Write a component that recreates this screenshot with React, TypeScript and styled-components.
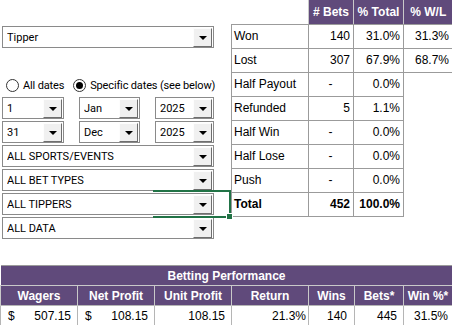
import React from 'react';
import styled, { createGlobalStyle } from 'styled-components';

const PURPLE = '#604a7b';
const GRID = '#9b9b9b';
const LIGHT = '#c9c9c9';

const GlobalStyle = createGlobalStyle`
  html, body { margin: 0; padding: 0; background: #fff; }
  body {
    width: 452px;
    height: 325px;
    overflow: hidden;
    font-family: "Liberation Sans", Arial, sans-serif;
  }
`;

const outcomes = [
  { label: 'Won', bets: '140', total: '31.0%', wl: '31.3%' },
  { label: 'Lost', bets: '307', total: '67.9%', wl: '68.7%' },
  { label: 'Half Payout', bets: '-', total: '0.0%' },
  { label: 'Refunded', bets: '5', total: '1.1%' },
  { label: 'Half Win', bets: '-', total: '0.0%' },
  { label: 'Half Lose', bets: '-', total: '0.0%' },
  { label: 'Push', bets: '-', total: '0.0%' },
];

const filters = ['ALL SPORTS/EVENTS', 'ALL BET TYPES', 'ALL TIPPERS', 'ALL DATA'];

const Dropdown: React.FC<{ value: string; width?: number }> = ({ value, width }) => (
  <Select $w={width}>
    <SelectText>{value}</SelectText>
    <DropButton>
      <Arrow />
    </DropButton>
  </Select>
);

const App: React.FC = () => {
  return (
    <Sheet>
      <GlobalStyle />
      <Top>
        <Controls>
          <TipperWrap>
            <Dropdown value="Tipper" />
          </TipperWrap>
          <RadioRow>
            <RadioItem>
              <Radio />
              All dates
            </RadioItem>
            <RadioItem>
              <Radio $checked />
              Specific dates (see below)
            </RadioItem>
          </RadioRow>
          <DateRow>
            <Dropdown value="1" width={62} />
            <Dropdown value="Jan" width={61} />
            <Dropdown value="2025" width={59} />
          </DateRow>
          <DateRow>
            <Dropdown value="31" width={62} />
            <Dropdown value="Dec" width={61} />
            <Dropdown value="2025" width={59} />
          </DateRow>
          {filters.map((f) => (
            <Dropdown key={f} value={f} />
          ))}
        </Controls>

        <StatsTable>
          <colgroup>
            <col style={{ width: 77 }} />
            <col style={{ width: 45 }} />
            <col style={{ width: 50 }} />
            <col style={{ width: 49 }} />
          </colgroup>
          <tbody>
            <Row>
              <Blank />
              <HeadCell># Bets</HeadCell>
              <HeadCell>% Total</HeadCell>
              <HeadCell>% W/L</HeadCell>
            </Row>
            {outcomes.map((o) => (
              <Row key={o.label}>
                <Cell>{o.label}</Cell>
                <Cell $align={o.bets === '-' ? 'center' : 'right'}>{o.bets}</Cell>
                <Cell $align="right">{o.total}</Cell>
                {o.wl ? <Cell $align="right">{o.wl}</Cell> : <Blank />}
              </Row>
            ))}
            <Row>
              <Cell $bold>Total</Cell>
              <Cell $bold $align="right">452</Cell>
              <Cell $bold $align="right">100.0%</Cell>
              <Blank />
            </Row>
          </tbody>
        </StatsTable>
      </Top>

      <PerfTable>
        <colgroup>
          <col style={{ width: 77 }} />
          <col style={{ width: 77 }} />
          <col style={{ width: 77 }} />
          <col style={{ width: 77 }} />
          <col style={{ width: 46 }} />
          <col style={{ width: 49 }} />
          <col style={{ width: 49 }} />
        </colgroup>
        <tbody>
          <PerfRow>
            <PerfTitle colSpan={7}>Betting Performance</PerfTitle>
          </PerfRow>
          <PerfRow>
            <PerfHead>Wagers</PerfHead>
            <PerfHead>Net Profit</PerfHead>
            <PerfHead>Unit Profit</PerfHead>
            <PerfHead>Return</PerfHead>
            <PerfHead>Wins</PerfHead>
            <PerfHead>Bets*</PerfHead>
            <PerfHead>Win %*</PerfHead>
          </PerfRow>
          <PerfRow>
            <PerfCell>
              <Money>
                <span>$</span>
                <span>507.15</span>
              </Money>
            </PerfCell>
            <PerfCell>
              <Money>
                <span>$</span>
                <span>108.15</span>
              </Money>
            </PerfCell>
            <PerfCell $pad={6}>108.15</PerfCell>
            <PerfCell $pad={2}>21.3%</PerfCell>
            <PerfCell $pad={7}>140</PerfCell>
            <PerfCell $pad={6}>445</PerfCell>
            <PerfCell $pad={4}>31.5%</PerfCell>
          </PerfRow>
        </tbody>
      </PerfTable>

      <Selection>
        <Handle />
      </Selection>
    </Sheet>
  );
};

const Sheet = styled.div`
  position: relative;
  width: 452px;
  height: 325px;
  background: #fff;
`;

const Top = styled.div`
  display: flex;
  height: 265px;
`;

const Controls = styled.div`
  width: 231px;
  flex-shrink: 0;
  box-sizing: border-box;
  padding: 26px 0 0 2px;
  display: flex;
  flex-direction: column;
  gap: 2px;
`;

const TipperWrap = styled.div`
  margin-bottom: 26px;
`;

const Select = styled.div<{ $w?: number }>`
  width: ${(p) => p.$w ?? 212}px;
  height: 22px;
  box-sizing: border-box;
  border: 1px solid #8a8a8a;
  background: #fff;
  display: flex;
  align-items: center;
  padding-left: 4px;
  font-family: Roboto, "Liberation Sans", sans-serif;
  font-size: 11px;
  color: #000;
`;

const SelectText = styled.span`
  flex: 1;
  white-space: nowrap;
  overflow: hidden;
`;

const DropButton = styled.div`
  width: 19px;
  height: 19px;
  margin-right: 1px;
  box-sizing: border-box;
  background: #f0f0f0;
  border: 1px solid;
  border-color: #fdfdfd #6e6e6e #6e6e6e #fdfdfd;
  display: flex;
  align-items: center;
  justify-content: center;
`;

const Arrow = styled.div`
  width: 0;
  height: 0;
  border-left: 4px solid transparent;
  border-right: 4px solid transparent;
  border-top: 4px solid #000;
  margin-top: 1px;
`;

const RadioRow = styled.div`
  height: 19px;
  display: flex;
  align-items: center;
  gap: 9px;
  padding-left: 4px;
  font-family: Roboto, "Liberation Sans", sans-serif;
  font-size: 11px;
  letter-spacing: -0.15px;
  color: #000;
`;

const RadioItem = styled.label`
  display: flex;
  align-items: center;
  gap: 4px;
  white-space: nowrap;
`;

const Radio = styled.span<{ $checked?: boolean }>`
  position: relative;
  width: 13px;
  height: 13px;
  box-sizing: border-box;
  border: 1px solid #333;
  border-radius: 50%;
  background: #fff;

  &::after {
    content: '';
    display: ${(p) => (p.$checked ? 'block' : 'none')};
    position: absolute;
    left: 2px;
    top: 2px;
    width: 7px;
    height: 7px;
    border-radius: 50%;
    background: #000;
  }
`;

const DateRow = styled.div`
  width: 212px;
  display: flex;
  justify-content: space-between;
`;

const StatsTable = styled.table`
  border-collapse: collapse;
  table-layout: fixed;
  width: 221px;
  height: 216px;
  font-size: 12px;
  color: #000;
`;

const Row = styled.tr`
  height: 24px;
`;

const Blank = styled.td`
  padding: 0;
  border: none;
`;

const HeadCell = styled.td`
  background: ${PURPLE};
  color: #fff;
  font-weight: bold;
  text-align: center;
  padding: 0;
  border-left: 1px solid ${LIGHT};
  border-bottom: 1px solid ${GRID};
  white-space: nowrap;
`;

const Cell = styled.td<{ $align?: string; $bold?: boolean }>`
  border: 1px solid ${GRID};
  padding: 0 3px 0 2px;
  text-align: ${(p) => p.$align ?? 'left'};
  font-weight: ${(p) => (p.$bold ? 'bold' : 'normal')};
  white-space: nowrap;
  overflow: hidden;
`;

const PerfTable = styled.table`
  border-collapse: collapse;
  table-layout: fixed;
  width: 452px;
  font-size: 12px;
  color: #000;
`;

const PerfRow = styled.tr`
  height: 20px;
`;

const PerfTitle = styled.td`
  background: ${PURPLE};
  color: #fff;
  font-weight: bold;
  text-align: center;
  padding: 0;
  border-top: 1px solid ${GRID};
  border-bottom: 1px solid ${LIGHT};
`;

const PerfHead = styled.td`
  background: ${PURPLE};
  color: #fff;
  font-weight: bold;
  text-align: center;
  padding: 0;
  border-left: 1px solid ${LIGHT};
  border-right: 1px solid ${LIGHT};
  white-space: nowrap;
`;

const PerfCell = styled.td<{ $pad?: number }>`
  border: 1px solid #b5b5b5;
  padding: 0 ${(p) => p.$pad ?? 6}px 0 0;
  text-align: right;
  white-space: nowrap;
`;

const Money = styled.div`
  display: flex;
  justify-content: space-between;
  padding-left: 7px;
`;

const Selection = styled.div`
  position: absolute;
  left: 153px;
  top: 190px;
  width: 76px;
  height: 24px;
  border: 2px solid #217346;
  border-left: none;
`;

const Handle = styled.div`
  position: absolute;
  right: -4px;
  bottom: -4px;
  width: 5px;
  height: 5px;
  background: #217346;
  border: 1px solid #fff;
`;

export default App;
